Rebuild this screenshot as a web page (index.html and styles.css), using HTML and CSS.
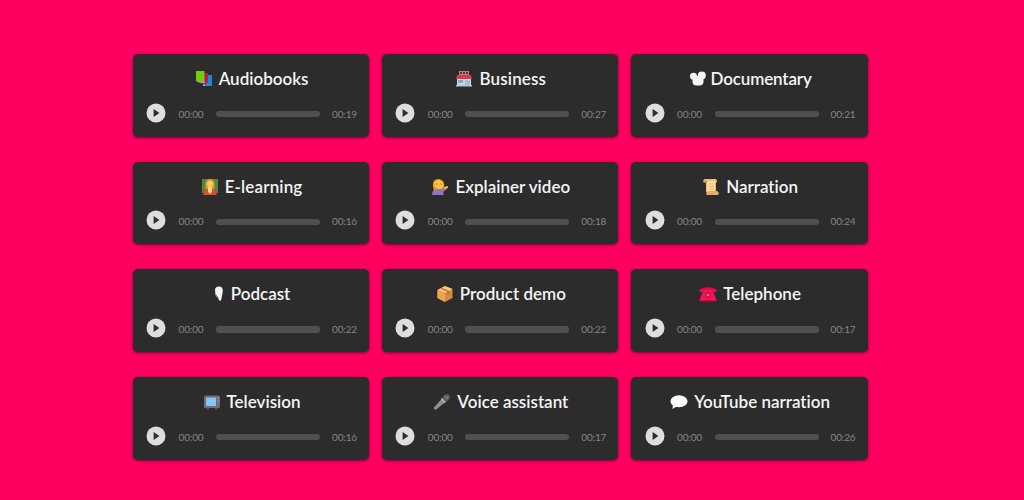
FILE: index.html
```
<!DOCTYPE html>
<html lang="en">
<head>
<meta charset="utf-8">
<title>Voice samples</title>
<link rel="stylesheet" href="styles.css">
</head>
<body>
<svg class="defs" aria-hidden="true">
  <symbol id="play" viewBox="0 0 20 20"><circle cx="10" cy="10" r="9.5" fill="#dedede"/><path d="M7.6 5.9v8.2l5.8-4.1z" fill="#2c2c2c"/></symbol>
</svg>
<main class="grid">
  <article class="card"><h2 class="title"><svg class="icon" viewBox="0 0 18 18"><path d="M8 5h9v11H8z" fill="#168ed0"/><path d="M8 14l2-1v3H8z" fill="#83c4df"/><path d="M5 3h8v9l-3 3-5-2z" fill="#b51753"/><path d="M1 1h8.5v10H1z" fill="#70cf09"/><path d="M1 11h8.5l1 2H5z" fill="#b49889"/></svg><span>Audiobooks</span></h2>
    <div class="player"><svg class="play"><use href="#play"/></svg><time class="time">00:00</time><div class="track"></div><time class="time">00:19</time></div></article>
  <article class="card"><h2 class="title"><svg class="icon" viewBox="0 0 18 18"><path d="M4 1h10v4H4z" fill="#b7838b"/><path d="M5 2h2v2H5zm3 0h2v2H8zm3 0h2v2h-2z" fill="#553a43"/><path d="M2 5h14l1 4H1z" fill="#d93a4e"/><path d="M2 9h14v7H2z" fill="#c8d6df"/><path d="M3 10h5v3H3z" fill="#75afd6"/><path d="M10 10h5v6h-5z" fill="#a3bfd2"/><path d="M1 15h16v1.5H1z" fill="#c2bec5"/></svg><span class="wide">Business</span></h2>
    <div class="player"><svg class="play"><use href="#play"/></svg><time class="time">00:00</time><div class="track"></div><time class="time">00:27</time></div></article>
  <article class="card"><h2 class="title close"><svg class="icon" viewBox="0 0 18 18"><g fill="#f5f5f5"><circle cx="4.5" cy="6.3" r="3.5"/><circle cx="12.8" cy="5.5" r="4"/><rect x="3.5" y="6" width="11" height="9.5" rx="4"/></g></svg><span class="narrow">Documentary</span></h2>
    <div class="player"><svg class="play"><use href="#play"/></svg><time class="time">00:00</time><div class="track"></div><time class="time">00:21</time></div></article>
  <article class="card"><h2 class="title"><svg class="icon" viewBox="0 0 18 18"><path d="M1 1h16v14H1z" fill="#9c672f"/><path d="M2 2h14v12H2z" fill="#339449"/><path d="M4.5 8q-.5-7 4.500-7t4.500 7v3h-9z" fill="#e69a2c"/><circle cx="9" cy="6" r="3" fill="#ffd05a"/><path d="M2 17l3-6 4-1 4 1 3 6z" fill="#e54b28"/><path d="M7 9h4v5l-2 2-2-2z" fill="#ffd28a"/></svg><span class="wide">E-learning</span></h2>
    <div class="player"><svg class="play"><use href="#play"/></svg><time class="time">00:00</time><div class="track"></div><time class="time">00:16</time></div></article>
  <article class="card"><h2 class="title"><svg class="icon" viewBox="0 0 18 18"><path d="M2 8q-1-7 6-7 6 1 5 8l-2 4H3z" fill="#f0a020"/><circle cx="8" cy="6.500" r="4.300" fill="#ffc83b"/><path d="M5 6h1.400m3 0h1.400" stroke="#99651f"/><path d="M1 17q0-6 5-6h5l4-2 1 2-4 3 1 3z" fill="#9a71bd"/><path d="M12 9l5-1v2l-3 1z" fill="#f7b52f"/></svg><span>Explainer video</span></h2>
    <div class="player"><svg class="play"><use href="#play"/></svg><time class="time">00:00</time><div class="track"></div><time class="time">00:18</time></div></article>
  <article class="card"><h2 class="title"><svg class="icon" viewBox="0 0 18 18"><path d="M3 1h11q2 2 0 4v9H4V5H2Q0 2 3 1z" fill="#edbd78"/><path d="M5 3h8v12H5z" fill="#ffdb9b"/><path d="M6 13h9q3 2 1 4H5q-2-2 1-4z" fill="#e9ad64"/><path d="M2 3h3v2H2z" fill="#c18e56"/><path d="M7 6h5M7 8.500h5M7 11h5" stroke="#e2b879" stroke-width=".8"/></svg><span>Narration</span></h2>
    <div class="player"><svg class="play"><use href="#play"/></svg><time class="time">00:00</time><div class="track"></div><time class="time">00:24</time></div></article>
  <article class="card"><h2 class="title"><svg class="icon slim" viewBox="0 0 12 18"><path d="M2 5q0-3.500 4-3.500T9.800 6L9 11l-1 4.500H6L5 12 2.500 9z" fill="#f5f5f5"/><path d="M2.200 7l1 4 2 2" fill="none" stroke="#bbb" stroke-width=".8"/></svg><span>Podcast</span></h2>
    <div class="player"><svg class="play"><use href="#play"/></svg><time class="time">00:00</time><div class="track"></div><time class="time">00:22</time></div></article>
  <article class="card"><h2 class="title"><svg class="icon" viewBox="0 0 18 18"><path d="M1.500 5L9 1l7.500 3v9L9 17l-7.500-4z" fill="#d58a3d"/><path d="M1.500 5L9 1l7.500 3L9 8z" fill="#ffc67a"/><path d="M1.500 5L9 8v9l-7.500-4z" fill="#efa352"/><path d="M4.500 3.800l7 3v3l1.500-1V6L6 3z" fill="#a87038"/></svg><span>Product demo</span></h2>
    <div class="player"><svg class="play"><use href="#play"/></svg><time class="time">00:00</time><div class="track"></div><time class="time">00:22</time></div></article>
  <article class="card"><h2 class="title"><svg class="icon" viewBox="0 0 18 18"><path d="M.5 7V4.500q8.500-4.500 17 0V7h-4V5h-9v2z" fill="#e9084a"/><path d="M4.500 5h9l4 10v1H.5v-1z" fill="#f51257"/><circle cx="9" cy="10" r="3" fill="#c90b45"/><circle cx="9" cy="10" r="1.600" fill="#ff5a82"/><path d="M.5 15h17v1.500H.5z" fill="#cb0940"/></svg><span>Telephone</span></h2>
    <div class="player"><svg class="play"><use href="#play"/></svg><time class="time">00:00</time><div class="track"></div><time class="time">00:17</time></div></article>
  <article class="card"><h2 class="title"><svg class="icon" viewBox="0 0 18 18"><rect x="1" y="2.500" width="16" height="12.500" rx="1.500" fill="#746c73"/><path d="M4 15h2v1.500H3zm8 0h2l1 1.500h-3z" fill="#54505b"/><rect x="3" y="4.500" width="10" height="8.500" rx="1" fill="#83c8f5"/><path d="M14.300 5h1.500M14.300 8h1.500" stroke="#aaa"/></svg><span>Television</span></h2>
    <div class="player"><svg class="play"><use href="#play"/></svg><time class="time">00:00</time><div class="track"></div><time class="time">00:16</time></div></article>
  <article class="card"><h2 class="title"><svg class="icon" viewBox="0 0 18 18"><path d="M.5 15l8.500-9.500 3.500 3.500L2.500 17z" fill="#919096"/><path d="M8.500 5.500l4 4" stroke="#c5bdc9" stroke-width="1.500"/><path d="M9.500 5l2-3q3-1.500 5 0 1 3-1 5l-3 2z" fill="#655d71"/><path d="M12 3l3 3" stroke="#928a9e"/></svg><span>Voice assistant</span></h2>
    <div class="player"><svg class="play"><use href="#play"/></svg><time class="time">00:00</time><div class="track"></div><time class="time">00:17</time></div></article>
  <article class="card"><h2 class="title"><svg class="icon" viewBox="0 0 18 18"><ellipse cx="9" cy="8.200" rx="8.500" ry="6" fill="#fafafa"/><path d="M3 11l-.5 5 5-3z" fill="#fafafa"/></svg><span>YouTube narration</span></h2>
    <div class="player"><svg class="play"><use href="#play"/></svg><time class="time">00:00</time><div class="track"></div><time class="time">00:26</time></div></article>
</main>
</body>
</html>
```
FILE: styles.css
```
* { box-sizing: border-box; }
body { margin: 0; height: 500px; overflow: hidden; background: #ff0060; font-family: Lato, sans-serif; font-variant-ligatures: none; }
.defs { display: none; }
.grid { display: grid; grid-template-columns: repeat(3, 236.6px); grid-auto-rows: 82.7px; gap: 25px 12.7px; padding: 54.1px 0 0 132.5px; }
.card { background: #2c2c2c; border-radius: 5px; box-shadow: 0 1px 3px rgba(50, 0, 25, .65); padding: 13px 12px 0 13.5px; }
.title { display: flex; justify-content: center; align-items: center; gap: 6px; height: 24px; margin: 0; color: #f5f5f5; font-size: 17px; font-weight: 600; line-height: 24px; white-space: nowrap; }
.close { gap: 4px; }
.wide { letter-spacing: .15px; }
.narrow { letter-spacing: -.15px; }
.icon { width: 18px; height: 18px; flex: none; }
.slim { width: 12px; }
.player { display: flex; align-items: center; height: 20px; margin-top: 12px; }
.play { width: 20px; height: 20px; margin-top: -1px; flex: none; }
.time { width: 25px; margin-left: 12.5px; color: #858585; font-size: 10px; line-height: 14px; letter-spacing: -.15px; white-space: nowrap; padding-top: 1px; }
.track { width: 104px; height: 6.5px; margin-left: 12.5px; margin-top: 2px; border-radius: 3px; background: #505050; flex: none; }
.track + .time { margin-left: 12px; }
```
